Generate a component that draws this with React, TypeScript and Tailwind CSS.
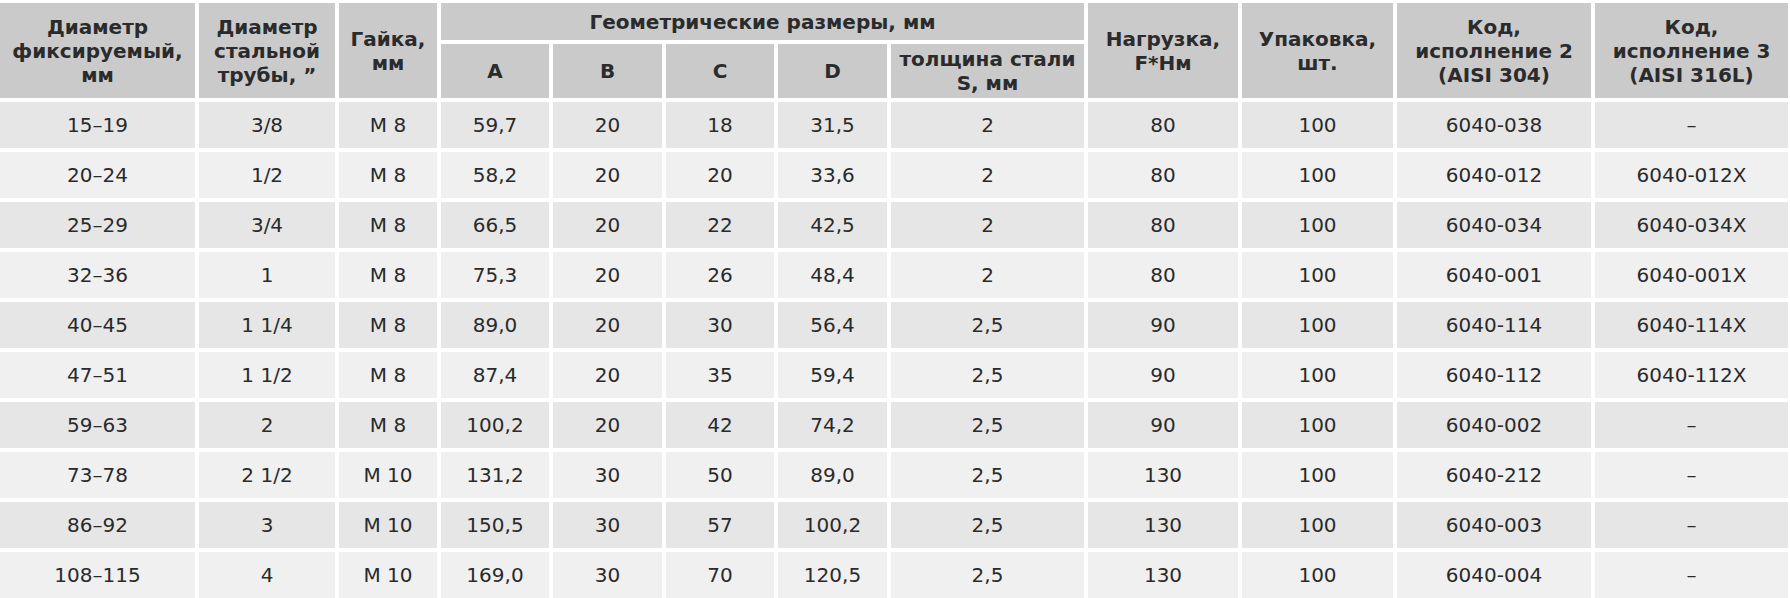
const rows: string[][] = [
  ['15–19', '3/8', 'М 8', '59,7', '20', '18', '31,5', '2', '80', '100', '6040-038', '–'],
  ['20–24', '1/2', 'М 8', '58,2', '20', '20', '33,6', '2', '80', '100', '6040-012', '6040-012X'],
  ['25–29', '3/4', 'М 8', '66,5', '20', '22', '42,5', '2', '80', '100', '6040-034', '6040-034X'],
  ['32–36', '1', 'М 8', '75,3', '20', '26', '48,4', '2', '80', '100', '6040-001', '6040-001X'],
  ['40–45', '1 1/4', 'М 8', '89,0', '20', '30', '56,4', '2,5', '90', '100', '6040-114', '6040-114X'],
  ['47–51', '1 1/2', 'М 8', '87,4', '20', '35', '59,4', '2,5', '90', '100', '6040-112', '6040-112X'],
  ['59–63', '2', 'М 8', '100,2', '20', '42', '74,2', '2,5', '90', '100', '6040-002', '–'],
  ['73–78', '2 1/2', 'М 10', '131,2', '30', '50', '89,0', '2,5', '130', '100', '6040-212', '–'],
  ['86–92', '3', 'М 10', '150,5', '30', '57', '100,2', '2,5', '130', '100', '6040-003', '–'],
  ['108–115', '4', 'М 10', '169,0', '30', '70', '120,5', '2,5', '130', '100', '6040-004', '–'],
];

const head = 'flex items-center justify-center text-center bg-[#cacacb] font-bold text-[20px] leading-[24px] text-[#2b2b2b]';

function Head({ children, className = '' }: { children: React.ReactNode; className?: string }) {
  return <div className={`${head} ${className}`}>{children}</div>;
}

export default function App() {
  return (
    <div className="w-[1790px] h-[598px] bg-white overflow-hidden font-['DejaVu_Sans',sans-serif]">
      <div className="grid gap-[4px] pt-[3px] grid-cols-[195px_136px_98px_108px_109px_108px_109px_193px_150px_151px_194px_193px] grid-rows-[37px_54px_repeat(10,46px)]">
        <Head className="row-span-2">Диаметр<br />фиксируемый,<br />мм</Head>
        <Head className="row-span-2">Диаметр<br />стальной<br />трубы, ”</Head>
        <Head className="row-span-2">Гайка,<br />мм</Head>
        <Head className="col-span-5">Геометрические размеры, мм</Head>
        <Head className="row-span-2">Нагрузка,<br />F*Нм</Head>
        <Head className="row-span-2">Упаковка,<br />шт.</Head>
        <Head className="row-span-2">Код,<br />исполнение 2<br />(AISI 304)</Head>
        <Head className="row-span-2">Код,<br />исполнение 3<br />(AISI 316L)</Head>
        <Head>A</Head>
        <Head>B</Head>
        <Head>C</Head>
        <Head>D</Head>
        <Head>толщина стали<br />S, мм</Head>

        {rows.map((r, i) =>
          r.map((v, j) => (
            <div
              key={`${i}-${j}`}
              className={`flex items-center justify-center text-[20px] text-[#2a2a2a] ${
                i % 2 === 0 ? 'bg-[#e6e6e7]' : 'bg-[#f0f0f1]'
              }`}
            >
              {v}
            </div>
          ))
        )}
      </div>
    </div>
  );
}
